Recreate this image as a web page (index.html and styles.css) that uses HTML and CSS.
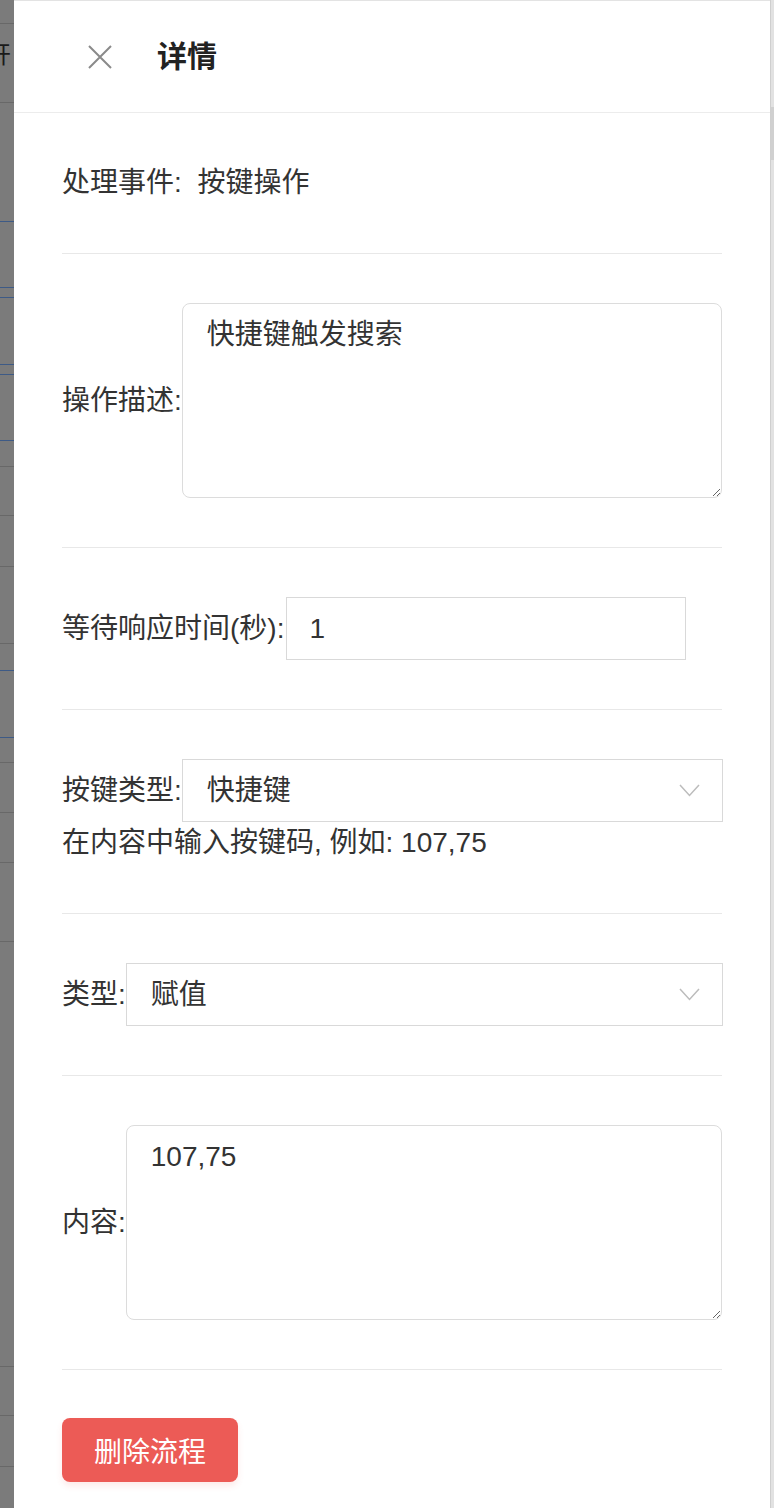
FILE: index.html
```html
<!DOCTYPE html>
<html lang="zh-CN">
<head>
    <meta charset="UTF-8">
    <meta name="viewport" content="width=device-width, initial-scale=1.0">
    <title>详情</title>
    <link rel="stylesheet" href="styles.css">
</head>
<body>

<div class="screen">
    <!-- 背景遮罩下的页面 -->
    <div class="backdrop">
        <div class="bd-row h24"></div>
        <div class="bd-row h63"><span class="bd-text">开</span></div>
        <div class="bd-row h119 blue"></div>
        <div class="bd-row h66 blue"></div>
        <div class="bd-row h10 blue"></div>
        <div class="bd-row h67 blue"></div>
        <div class="bd-row h10 blue"></div>
        <div class="bd-row h66 blue"></div>
        <div class="bd-row h26"></div>
        <div class="bd-row h49"></div>
        <div class="bd-row h51"></div>
        <div class="bd-row h77"></div>
        <div class="bd-row h27 blue"></div>
        <div class="bd-row h67 blue"></div>
        <div class="bd-row h25"></div>
        <div class="bd-row h50"></div>
        <div class="bd-row h50"></div>
        <div class="bd-row h79"></div>
        <div class="bd-row h425"></div>
        <div class="bd-row h49"></div>
        <div class="bd-row h51"></div>
    </div>

    <!-- 抽屉 -->
    <div class="drawer">
        <div class="drawer-header">
            <svg class="close-icon" width="24" height="24" viewBox="0 0 24 24">
                <path d="M1 1 L23 23 M23 1 L1 23" stroke="#8a8a8a" stroke-width="2" fill="none"/>
            </svg>
            <h2 class="drawer-title">详情</h2>
        </div>

        <div class="drawer-body">
            <div class="field">
                <span class="label">处理事件:</span>
                <span class="value">按键操作</span>
            </div>

            <div class="field">
                <div class="field-row">
                    <label class="label">操作描述:</label>
                    <textarea class="textarea">快捷键触发搜索</textarea>
                </div>
            </div>

            <div class="field">
                <div class="field-row">
                    <label class="label">等待响应时间(秒):</label>
                    <input class="input" type="text" value="1">
                </div>
            </div>

            <div class="field">
                <div class="field-row">
                    <label class="label">按键类型:</label>
                    <div class="select-wrap">
                        <select class="select">
                            <option>快捷键</option>
                        </select>
                        <svg class="chevron" width="21" height="13" viewBox="0 0 21 13">
                            <path d="M1 1 L10.5 11.5 L20 1" stroke="#bcbcbc" stroke-width="1.5" fill="none"/>
                        </svg>
                    </div>
                </div>
                <p class="hint">在内容中输入按键码, 例如: 107,75</p>
            </div>

            <div class="field">
                <div class="field-row">
                    <label class="label">类型:</label>
                    <div class="select-wrap">
                        <select class="select">
                            <option>赋值</option>
                        </select>
                        <svg class="chevron" width="21" height="13" viewBox="0 0 21 13">
                            <path d="M1 1 L10.5 11.5 L20 1" stroke="#bcbcbc" stroke-width="1.5" fill="none"/>
                        </svg>
                    </div>
                </div>
            </div>

            <div class="field">
                <div class="field-row">
                    <label class="label">内容:</label>
                    <textarea class="textarea">107,75</textarea>
                </div>
            </div>

            <div class="actions">
                <button class="btn-danger">删除流程</button>
            </div>
        </div>
    </div>

    <div class="scrollbar"><div class="thumb"></div></div>
</div>

</body>
</html>
```

FILE: styles.css
```css
/* ===== 基础 ===== */
body {
    margin: 0;
    font-family: "Liberation Sans", "Noto Sans CJK SC", sans-serif;
    color: #333;
    background: #fff;
}

.screen {
    display: flex;
    height: 1508px;
    overflow: hidden;
}

/* ===== 左侧遮罩 ===== */
.backdrop {
    width: 14px;
    flex: none;
    background: #7b7b7b;
    overflow: hidden;
}

.bd-row {
    border-bottom: 1px solid #686868;
    box-sizing: border-box;
}

.bd-row.blue {
    border-bottom: 1px solid #3d5a86;
}

.bd-text {
    display: block;
    margin-left: -13px;
    margin-top: 16px;
    font-size: 24px;
    line-height: 30px;
    color: #1a1a1a;
}

.h10 { height: 10px; }
.h24 { height: 24px; }
.h25 { height: 25px; }
.h26 { height: 26px; }
.h27 { height: 27px; }
.h49 { height: 49px; }
.h50 { height: 50px; }
.h51 { height: 51px; }
.h63 { height: 63px; }
.h66 { height: 66px; }
.h67 { height: 67px; }
.h77 { height: 77px; }
.h79 { height: 79px; }
.h119 { height: 119px; }
.h425 { height: 425px; }

/* ===== 抽屉 ===== */
.drawer {
    flex: 1;
    background: #fff;
    border-top: 1px solid #e3e3e3;
}

.drawer-header {
    display: flex;
    align-items: center;
    height: 112px;
    padding-left: 74px;
    border-bottom: 1px solid #ececec;
    box-sizing: border-box;
}

.close-icon {
    flex: none;
}

.drawer-title {
    margin: 0 0 0 45px;
    font-size: 30px;
    font-weight: bold;
    color: #222;
    line-height: 40px;
}

.drawer-body {
    padding: 0 48px;
}

/* ===== 表单项 ===== */
.field {
    padding: 49px 0;
    border-bottom: 1px solid #e8e8e8;
    font-size: 28px;
    line-height: 42px;
}

.field-row {
    display: flex;
    align-items: center;
}

.label {
    flex: none;
    color: #333;
}

.value {
    margin-left: 8px;
}

.textarea {
    flex: 1;
    height: 195px;
    box-sizing: border-box;
    margin: 0;
    padding: 11px 24px;
    border: 1px solid #dcdcdc;
    border-radius: 8px;
    font-family: inherit;
    font-size: 28px;
    line-height: 40px;
    color: #333;
    outline: none;
}

.input {
    width: 400px;
    height: 63px;
    box-sizing: border-box;
    margin: 0 0 0 2px;
    padding: 0 22px;
    border: 1px solid #d9d9d9;
    border-radius: 0;
    font-family: inherit;
    font-size: 28px;
    color: #333;
    outline: none;
}

.select-wrap {
    flex: 1;
    position: relative;
    margin-right: -1px;
}

.select {
    display: block;
    width: 100%;
    height: 63px;
    box-sizing: border-box;
    margin: 0;
    padding: 0 60px 0 24px;
    border: 1px solid #d9d9d9;
    border-radius: 0;
    appearance: none;
    background: #fff;
    font-family: inherit;
    font-size: 28px;
    color: #333;
    outline: none;
}

.chevron {
    position: absolute;
    right: 23px;
    top: 25px;
    pointer-events: none;
}

.hint {
    margin: 0;
    line-height: 42px;
    color: #333;
}

/* ===== 按钮 ===== */
.actions {
    padding-top: 48px;
}

.btn-danger {
    width: 176px;
    height: 64px;
    border: none;
    border-radius: 8px;
    background: #ec5b56;
    color: #fff;
    font-family: inherit;
    font-size: 28px;
    box-shadow: 0 4px 6px rgba(236, 91, 86, 0.12);
    cursor: pointer;
}

/* ===== 右侧滚动条 ===== */
.scrollbar {
    width: 4px;
    flex: none;
    background: #e2e2e2;
    border-left: 1px solid #cfcfcf;
    box-sizing: border-box;
}

.thumb {
    margin-top: 107px;
    height: 53px;
    background: #d0d0d0;
}
```
